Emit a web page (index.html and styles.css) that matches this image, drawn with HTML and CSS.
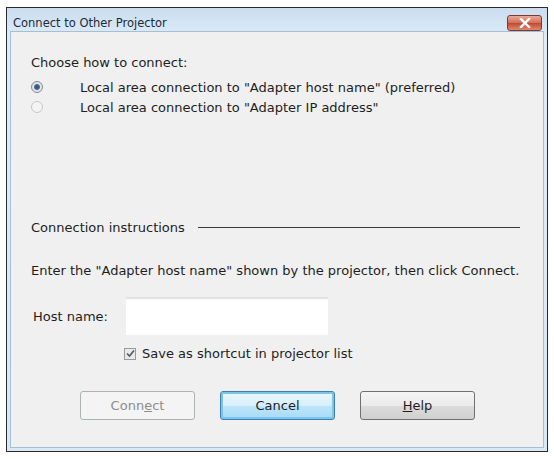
FILE: index.html
```html
<!DOCTYPE html>
<html>
<head>
    <title>Connect to Other Projector</title>
    <link rel="stylesheet" href="styles.css">
</head>
<body>
    <div class="window">
        <div class="title-bar">
            <span class="title">Connect to Other Projector</span>
            <div class="close-btn">
                <svg width="14" height="10" viewBox="0 0 14 10">
                    <path d="M3 1 L11 9 M11 1 L3 9" stroke="#fff" stroke-width="2.4" stroke-linecap="square"/>
                </svg>
            </div>
        </div>
        <div class="client">
            <p class="choose">Choose how to connect:</p>

            <div class="radio-row first">
                <span class="radio checked"></span>
                <span>Local area connection to "Adapter host name" (preferred)</span>
            </div>
            <div class="radio-row">
                <span class="radio"></span>
                <span>Local area connection to "Adapter IP address"</span>
            </div>

            <div class="group-head">
                <span>Connection instructions</span>
                <span class="rule"></span>
            </div>

            <p class="instr">Enter the "Adapter host name" shown by the projector, then click Connect.</p>

            <div class="host-row">
                <span class="host-label">Host name:</span>
                <div class="host-input"></div>
            </div>

            <div class="check-row">
                <span class="checkbox">
                    <svg width="9" height="9" viewBox="0 0 9 9">
                        <path d="M1 4.5 L3.5 7 L8 1.5" stroke="#4a5a6a" stroke-width="1.6" fill="none"/>
                    </svg>
                </span>
                <span>Save as shortcut in projector list</span>
            </div>

            <div class="button-row">
                <div class="btn disabled">Conn<u>e</u>ct</div>
                <div class="btn default">Cancel</div>
                <div class="btn"><u>H</u>elp</div>
            </div>
        </div>
    </div>
</body>
</html>
```

FILE: styles.css
```css
body {
    margin: 0;
    background-color: #ffffff;
    font-family: "DejaVu Sans", Tahoma, sans-serif;
    font-size: 13px;
    line-height: 15px;
    color: #1e1e1e;
}

.window {
    margin: 7px 6px 0 6px;
    width: 542px;
    height: 445px;
    border: 1px solid #2a2a2a;
    background: linear-gradient(to bottom, #c9ddef, #dfecf7 30px, #d8e8f4);
    padding: 0 3px 3px 3px;
    display: flex;
    flex-direction: column;
    box-sizing: border-box;
}

.title-bar {
    height: 23px;
    display: flex;
    align-items: center;
    justify-content: space-between;
    padding-left: 3px;
    padding-right: 2px;
}

.title {
    font-size: 11.5px;
    color: #1d2a3a;
    padding-top: 7px;
}

.close-btn {
    width: 35px;
    height: 16px;
    margin-top: 6px;
    border: 1px solid #7a3a30;
    border-radius: 3px;
    background: linear-gradient(to bottom, #e8aa9c, #d46c58 50%, #c04a32 52%, #dc8a70);
    display: flex;
    align-items: center;
    justify-content: center;
    box-sizing: border-box;
}

.client {
    flex: 1;
    background-color: #f0f0f0;
    border: 1px solid #a7bfd6;
    padding-left: 20px;
    box-sizing: border-box;
}

.choose {
    margin: 23px 0 0 0;
}

.radio-row {
    display: flex;
    align-items: center;
    height: 20px;
}

.radio-row.first {
    margin-top: 7px;
}

.radio {
    width: 12px;
    height: 12px;
    border-radius: 50%;
    border: 1px solid #c8c8c8;
    background: #f4f4f4;
    margin-right: 37px;
    box-sizing: border-box;
}

.radio.checked {
    border-color: #8a8a8a;
    background: radial-gradient(circle, #2c4a6a 0, #4f6f90 2.5px, #dfe6ee 3.5px);
}

.group-head {
    display: flex;
    align-items: center;
    margin-top: 103px;
    gap: 13px;
}

.rule {
    width: 322px;
    height: 1px;
    background-color: #3a3a3a;
}

.instr {
    margin: 28px 0 0 0;
}

.host-row {
    display: flex;
    align-items: center;
    margin-top: 19px;
}

.host-label {
    width: 93px;
    padding-left: 2px;
}

.host-input {
    width: 202px;
    height: 38px;
    background: linear-gradient(to bottom, #e0e0e0 0, #e0e0e0 1px, #ffffff 3px);
}

.check-row {
    display: flex;
    align-items: center;
    margin-top: 11px;
    margin-left: 93px;
    gap: 6px;
}

.checkbox {
    width: 12px;
    height: 12px;
    border: 1px solid #9a9a9a;
    background: #e9e9e9;
    display: flex;
    align-items: center;
    justify-content: center;
    box-sizing: border-box;
}

.button-row {
    display: flex;
    margin-top: 30px;
    margin-left: 49px;
    gap: 25px;
}

.btn {
    width: 115px;
    height: 29px;
    border: 1px solid #707070;
    border-radius: 3px;
    background: linear-gradient(to bottom, #f4f4f4, #ebebeb 50%, #dcdcdc 51%, #d0d0d0);
    display: flex;
    align-items: center;
    justify-content: center;
    box-sizing: border-box;
}

.btn.disabled {
    border-color: #adb2b5;
    background: #f4f4f4;
    color: #8d8d8d;
}

.btn.default {
    border-color: #3c7fb1;
    box-shadow: inset 0 0 0 2px #7ec4e6;
    background: linear-gradient(to bottom, #eaf6fd, #d9f0fc 50%, #bee6fd 51%, #a7d9f5);
}
```
